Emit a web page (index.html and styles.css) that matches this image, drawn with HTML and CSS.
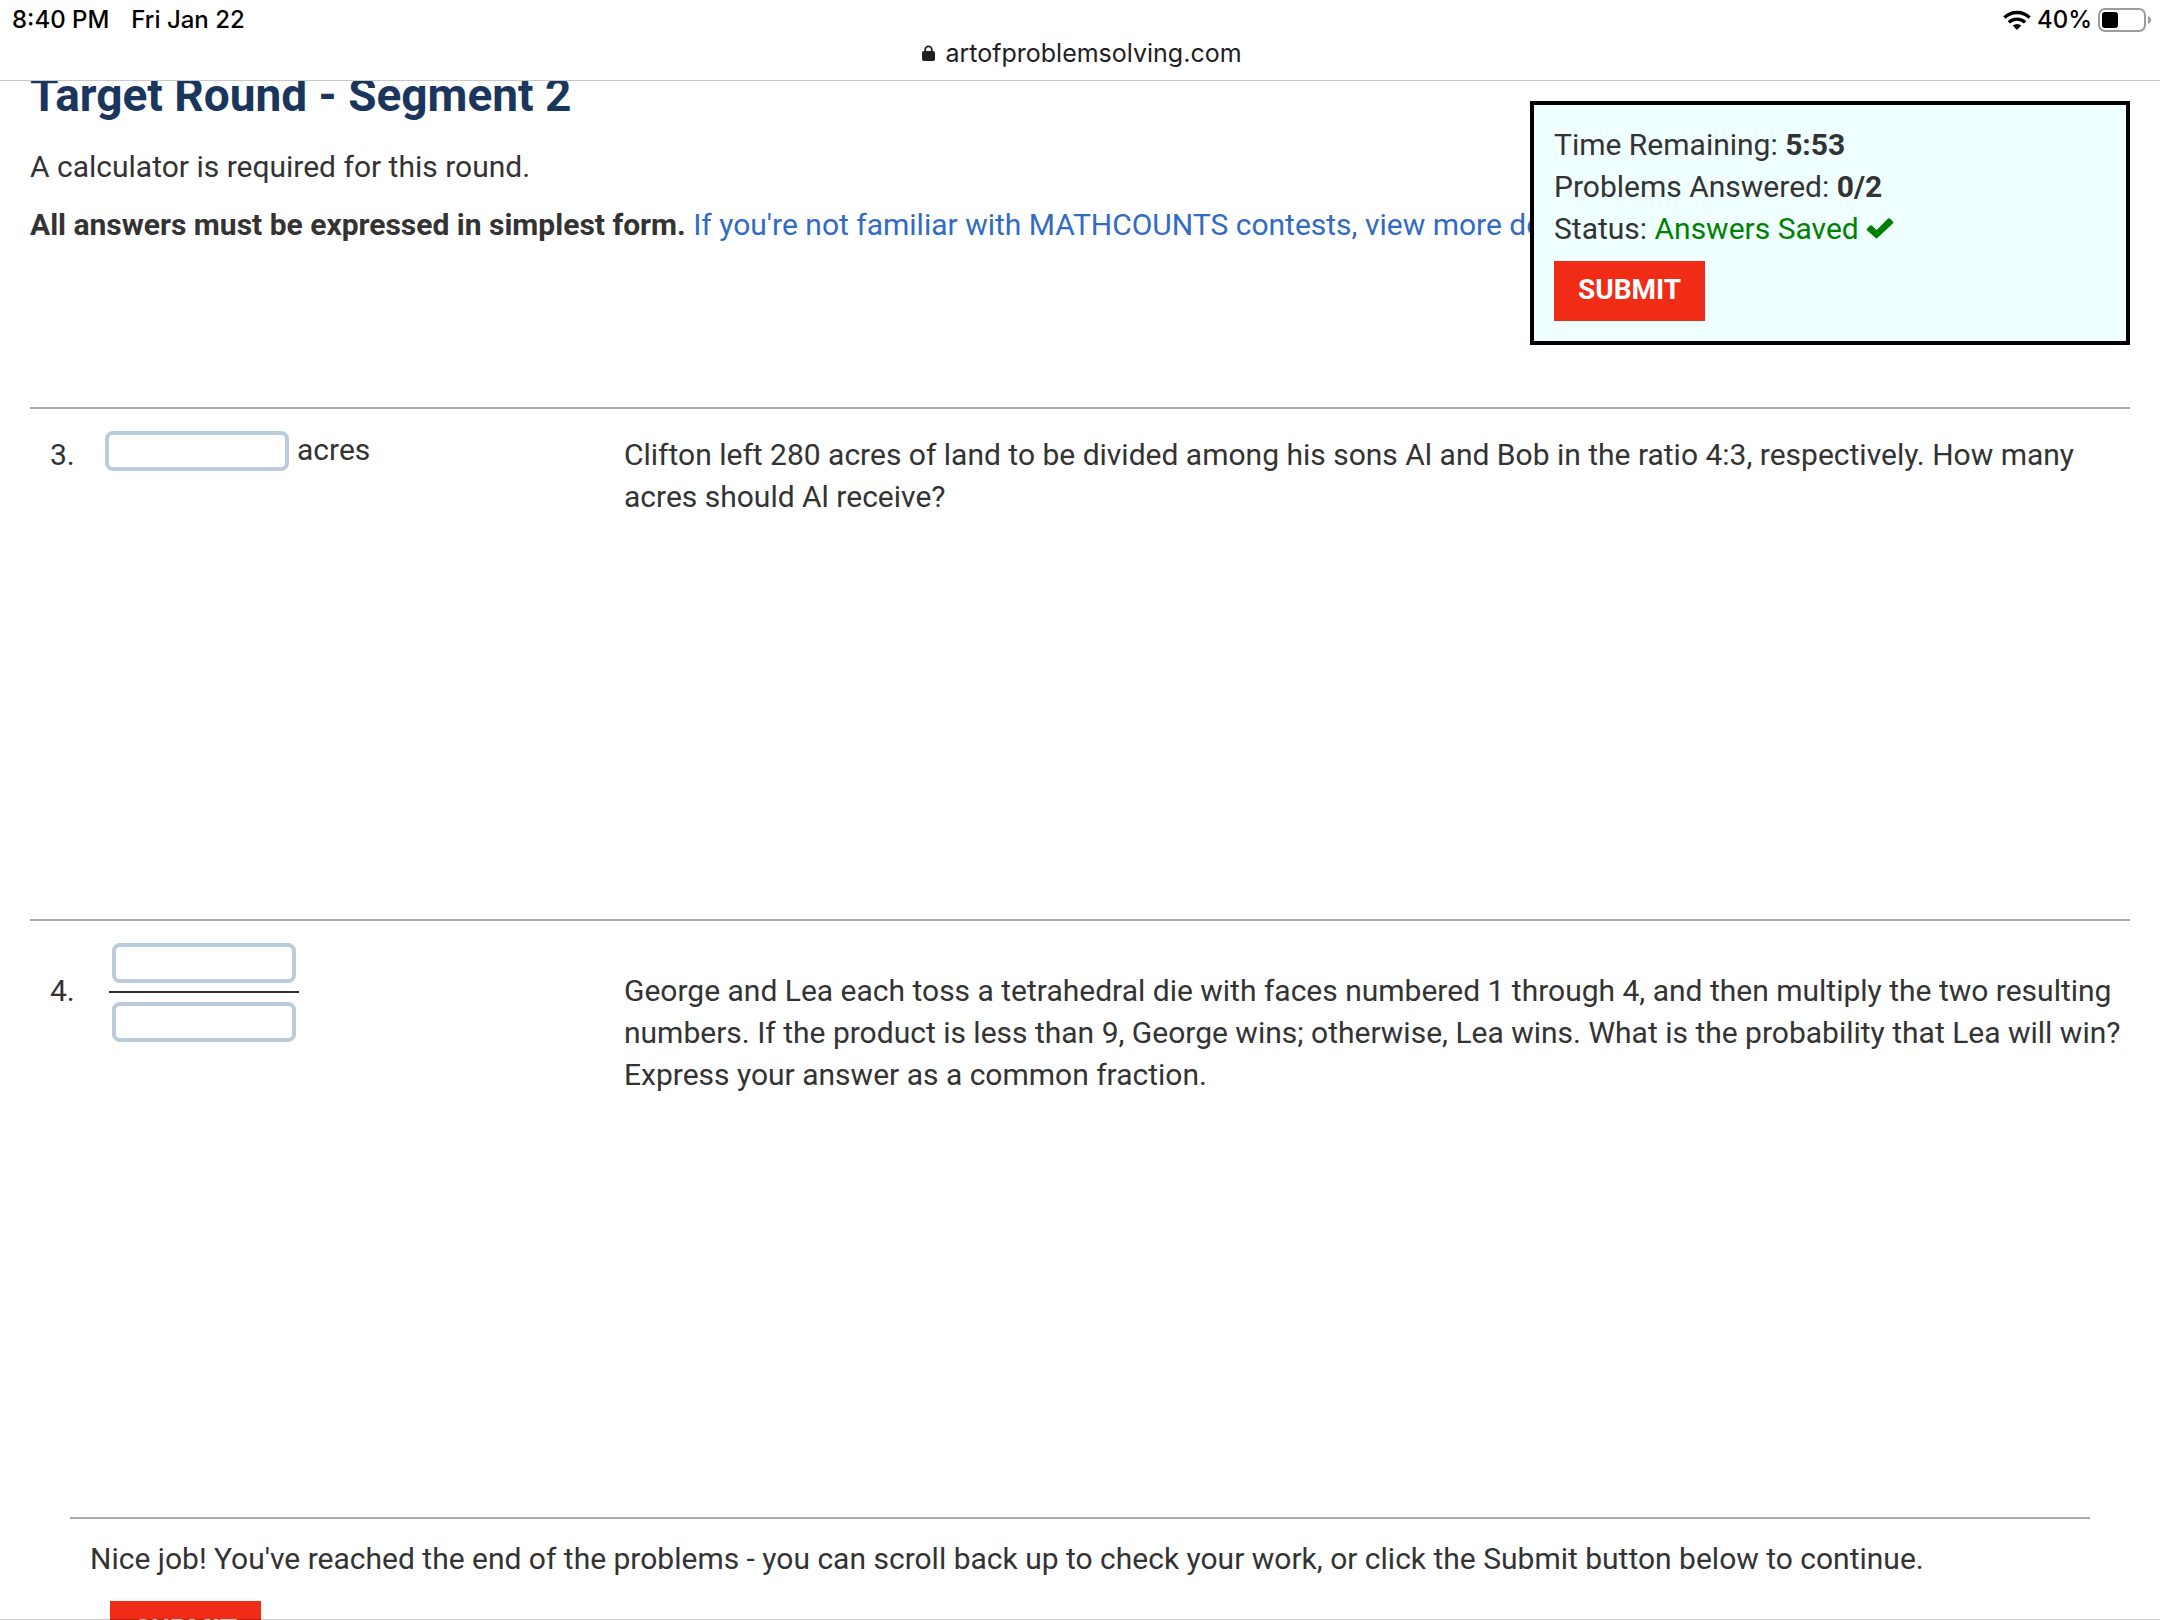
FILE: index.html
```html
<!DOCTYPE html>
<html lang="en">
<head>
<meta charset="utf-8">
<meta name="viewport" content="width=device-width, initial-scale=1">
<title>Target Round - Segment 2</title>
<link rel="stylesheet" href="styles.css">
</head>
<body>
<header class="chrome">
  <div class="status-bar">
    <div class="status-group">
      <span>8:40 PM</span>
      <span>Fri Jan 22</span>
    </div>
    <div class="status-icons">
      <svg class="wifi" viewBox="0 0 28 20" aria-hidden="true">
        <g fill="none" stroke="#000" stroke-width="3.4">
          <path d="M1.4 7.6a18 18 0 0 1 25.2 0"/>
          <path d="M5.9 12.4a11.6 11.6 0 0 1 16.2 0"/>
        </g>
        <path d="M14 20l-4.2-4.4a6 6 0 0 1 8.4 0z"/>
      </svg>
      <span>40%</span>
      <svg class="battery" viewBox="0 0 54 24" aria-hidden="true">
        <rect x="1" y="1" width="46" height="22" rx="6" fill="none" stroke="#9b9b9b" stroke-width="2"/>
        <rect x="4" y="4" width="16" height="16" rx="3"/>
        <path d="M50 8c4 1.6 4 6.400 0 8z" fill="#9b9b9b"/>
      </svg>
    </div>
  </div>
  <div class="address">
    <svg class="lock" viewBox="0 0 13 17" aria-hidden="true">
      <path d="M3.200 7V4.600a3.300 3.300 0 0 1 6.600 0V7" fill="none" stroke="#1f2024" stroke-width="1.800"/>
      <rect y="6" width="13" height="10" rx="2" fill="#1f2024"/>
    </svg>
    <span>artofproblemsolving.com</span>
  </div>
</header>

<main class="page">
  <section class="intro">
    <h1 class="title">Target Round - Segment 2</h1>
    <p class="note">A calculator is required for this round.</p>
    <p class="note"><strong>All answers must be expressed in simplest form.</strong> <a class="link" href="#details">If you're not familiar with MATHCOUNTS contests, view more details.</a></p>
  </section>

  <section class="problem">
    <div class="number">3.</div>
    <div class="answer">
      <input class="field" type="text" id="answer-3">
      <label for="answer-3">acres</label>
    </div>
    <p class="question">Clifton left 280 acres of land to be divided among his sons Al and Bob in the ratio 4:3, respectively. How many acres should Al receive?</p>
  </section>

  <section class="problem problem-fraction">
    <div class="number">4.</div>
    <div class="fraction">
      <div class="numerator"><input class="field" type="text" aria-label="Problem 4 numerator"></div>
      <div class="denominator"><input class="field" type="text" aria-label="Problem 4 denominator"></div>
    </div>
    <p class="question">George and Lea each toss a tetrahedral die with faces numbered 1 through 4, and then multiply the two resulting numbers. If the product is less than 9, George wins; otherwise, Lea wins. What is the probability that Lea will win? Express your answer as a common fraction.</p>
  </section>

  <section class="finish">
    <p class="finish-text">Nice job! You've reached the end of the problems - you can scroll back up to check your work, or click the Submit button below to continue.</p>
    <button class="submit" type="button">SUBMIT</button>
  </section>
</main>

<aside class="timer">
  <div>Time Remaining: <strong>5:53</strong></div>
  <div>Problems Answered: <strong>0/2</strong></div>
  <div>Status: <span class="saved">Answers Saved <svg class="check" viewBox="0 0 28 22" aria-hidden="true"><path d="M2 12.500l3-3 5.500 5.500L23 2.500l3 3L10.500 20z" fill="#008000" stroke="#008000" stroke-width="2.500" stroke-linejoin="round"/></svg></span></div>
  <button class="submit" type="button">SUBMIT</button>
</aside>
<div class="toolbar-edge"></div>
</body>
</html>
```
FILE: styles.css
```css
* {
  box-sizing: border-box;
}

body {
  margin: 0;
  height: 100vh;
  overflow: hidden;
  background: #fff;
  color: #333;
  font: 30px/42px Roboto, sans-serif;
}

h1,
p {
  margin: 0;
}

/* Browser chrome */
.chrome {
  position: relative;
  z-index: 1;
  height: 81px;
  background: #fff;
  border-bottom: 1px solid #c8c8c8;
  color: #000;
  font-family: Inter, sans-serif;
}

.status-bar {
  display: flex;
  justify-content: space-between;
  height: 39px;
  padding: 0 8px 0 12px;
  font-size: 24px;
  line-height: 40px;
  font-weight: 500;
}

.status-group {
  display: flex;
  gap: 22px;
}

.status-icons {
  display: flex;
  align-items: center;
  gap: 6px;
}

.wifi {
  width: 28px;
  height: 20px;
}

.battery {
  width: 54px;
  height: 24px;
}

.address {
  display: flex;
  justify-content: center;
  align-items: center;
  gap: 10px;
  height: 28px;
  padding-left: 4px;
  color: #1f2024;
  font-size: 25px;
  line-height: 28px;
}

.lock {
  width: 13px;
  height: 17px;
}

/* Contest page, scrolled slightly under the chrome */
.page {
  margin-top: -13px;
  padding: 0 30px;
}

.intro {
  height: 339px;
}

.title {
  margin-bottom: 24px;
  color: #1b365d;
  font-size: 46px;
  line-height: 54px;
  font-weight: 700;
}

.note {
  margin-bottom: 16px;
  white-space: nowrap;
}

.link {
  color: #326bc2;
  text-decoration: none;
}

.problem {
  display: grid;
  grid-template-columns: 55px 519px 1fr;
  align-items: start;
  min-height: 512px;
  padding: 22px 0 0 20px;
  border-top: 2px solid #a9a9a9;
}

.number,
.question {
  padding-top: 3px;
}

.answer {
  display: flex;
  align-items: center;
  gap: 8px;
  height: 40px;
}

.answer label {
  padding-bottom: 2px;
}

.field {
  display: block;
  width: 184px;
  height: 40px;
  padding: 0 8px;
  border: 4px solid #bacbda;
  border-radius: 8px;
  background: #fff;
  color: inherit;
  font: inherit;
}

.problem-fraction {
  min-height: 598px;
}

.problem-fraction .number,
.problem-fraction .question {
  padding-top: 27px;
}

.fraction {
  width: 190px;
  margin-left: 4px;
}

.numerator {
  padding: 0 3px 8px;
  border-bottom: 2px solid #333;
}

.denominator {
  padding: 9px 3px 0;
}

.finish {
  margin: 0 40px;
  padding: 19px 20px;
  border-top: 2px solid #a9a9a9;
}

.finish .submit {
  margin: 21px 0 0 20px;
}

.submit {
  display: block;
  height: 60px;
  margin-top: 11px;
  padding: 0 24px 2px;
  border: 0;
  background: #f02b16;
  color: #fff;
  font: 700 28px/56px Roboto, sans-serif;
}

/* Timer panel floats over the page */
.timer {
  position: absolute;
  top: 101px;
  right: 30px;
  width: 600px;
  padding: 19px 20px 20px;
  border: 4px solid #000;
  background: #f0ffff;
}

.saved {
  color: #008000;
}

.check {
  width: 28px;
  height: 22px;
  vertical-align: 0;
}

.toolbar-edge {
  position: absolute;
  inset: auto 0 0;
  height: 1px;
  background: rgba(0, 0, 0, 0.22);
}
```
